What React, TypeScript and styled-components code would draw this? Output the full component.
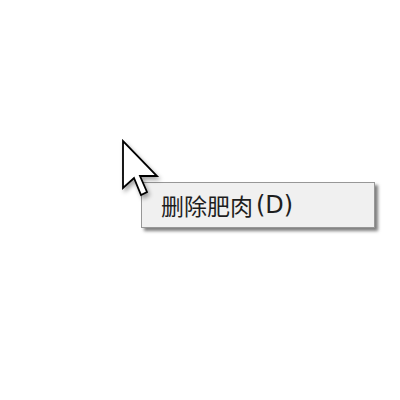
import React from "react";
import styled, { createGlobalStyle } from "styled-components";

const GlobalStyle = createGlobalStyle`
    html, body {
        margin: 0;
        padding: 0;
        background: #ffffff;
    }
`;

const Stage = styled.div`
    position: relative;
    width: 400px;
    height: 400px;
    overflow: hidden;
    background: #ffffff;
`;

const Menu = styled.div`
    position: absolute;
    left: 141px;
    top: 182px;
    width: 234px;
    height: 46px;
    box-sizing: border-box;
    display: flex;
    align-items: center;
    padding-left: 19px;
    background: #f0f0f0;
    border: 1px solid #979797;
    box-shadow: 3px 3px 3px rgba(0, 0, 0, 0.5);
`;

const MenuLabel = styled.span`
    font-family: "Noto Sans CJK SC", "Noto Sans", sans-serif;
    font-size: 23px;
    color: #1e1e1e;
    display: flex;
    align-items: center;
`;

const Accel = styled.span`
    font-family: "DejaVu Sans", sans-serif;
    font-size: 24px;
    margin-left: 3px;
    color: #1e1e1e;
`;

const Cursor = styled.svg`
    position: absolute;
    left: 121px;
    top: 139px;
    filter: drop-shadow(2px 3px 2px rgba(0, 0, 0, 0.35));
`;

export default function App() {
    return (
        <Stage>
            <GlobalStyle />
            <Menu>
                <MenuLabel>
                    删除肥肉<Accel>(D)</Accel>
                </MenuLabel>
            </Menu>
            <Cursor width="42" height="62" viewBox="0 0 42 62">
                <path
                    d="M2 2 L2 49 L13 39 L20 56 L26 53 L19 37 L36 37 Z"
                    fill="#ffffff"
                    stroke="#000000"
                    strokeWidth="1.8"
                    strokeLinejoin="miter"
                />
            </Cursor>
        </Stage>
    );
}
